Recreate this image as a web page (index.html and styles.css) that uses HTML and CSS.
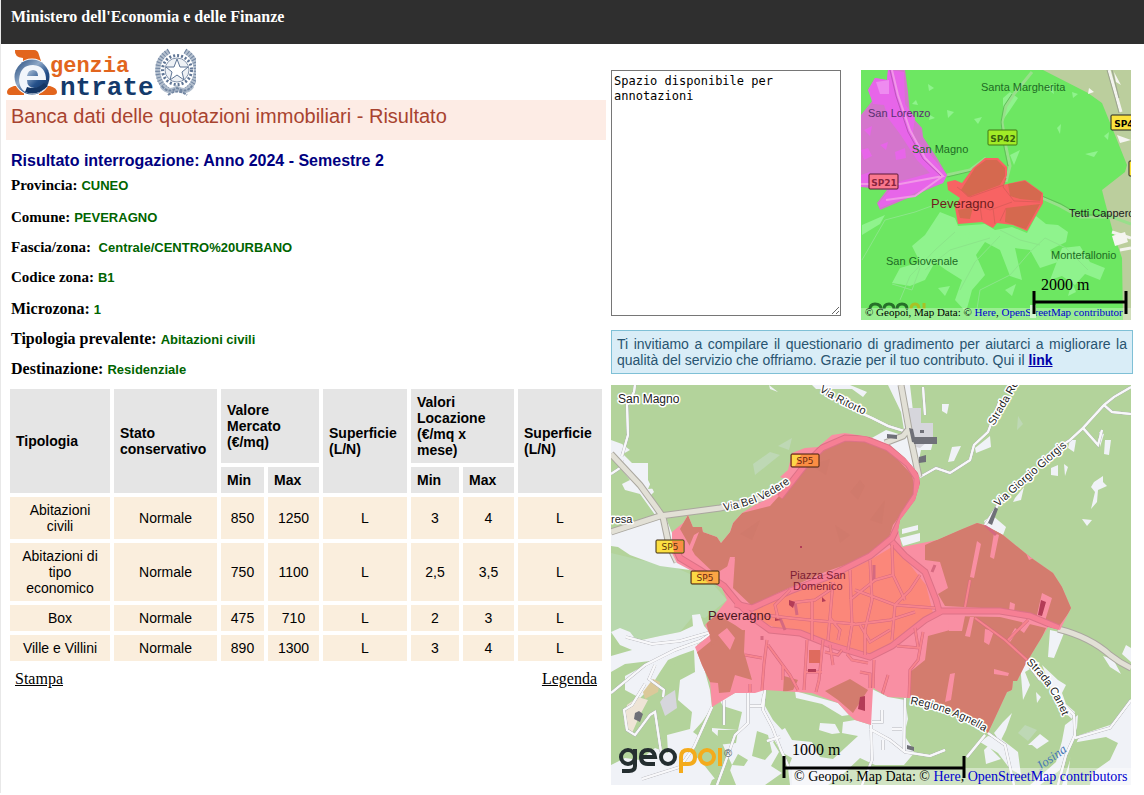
FILE: index.html
```html
<!DOCTYPE html>
<html lang="it">
<head>
<meta charset="utf-8">
<title>Banca dati delle quotazioni immobiliari - Risultato</title>
<link rel="stylesheet" href="styles.css">
</head>
<body>
<header class="topbar">Ministero dell'Economia e delle Finanze</header>
<main class="layout">
  <section class="results">
    <svg class="logo" viewBox="6 48 190 49" role="img" aria-label="Agenzia Entrate">
      <defs>
        <linearGradient id="ball" x1="0" y1="0" x2="1" y2="1"><stop offset="0" stop-color="#1d4478"/><stop offset=".4" stop-color="#8fa9c8"/><stop offset=".65" stop-color="#24508a"/><stop offset="1" stop-color="#0c2a55"/></linearGradient>
      </defs>
      <path d="M15 50H34Q38 50 39 55L41 61H23V58Q14 57 15 50Z" fill="#e2651d"/>
      <path d="M7 92Q7 88 14 86H24V95H10Q7 95 7 92ZM39 95V86H50Q57 88 57 92Q57 95 53 95Z" fill="#e2651d"/>
      <circle cx="32" cy="77" r="18.500" fill="#fff"/>
      <circle cx="32" cy="77" r="17.500" fill="url(#ball)"/>
      <path d="M19 80Q20 65 33 65Q46 66 46 80H27Q27 88 35 88Q40 88 44 84L47 87Q41 94 32 94Q20 93 19 80ZM27 76H38Q38 70 33 70Q28 70 27 76Z" fill="#f2f6fb"/>
      <path d="M25 92Q37 97 48 86L44 83Q37 90 27 87Z" fill="#143665"/>
      <text x="50" y="72" class="logo-top">genzia</text>
      <text x="60" y="95" class="logo-bottom">ntrate</text>
      <g fill="none" stroke="#7387a3">
        <path d="M169 51Q156 59 158 74Q160 86 170 91M185 51Q198 59 196 74Q194 86 184 91" stroke="#b3bfce" stroke-width="5"/>
        <path d="M169 51Q156 59 158 74Q160 86 170 91M185 51Q198 59 196 74Q194 86 184 91" stroke-width="5" stroke-dasharray="1 2"/>
        <circle cx="177" cy="70" r="14.500" stroke="#5f7595" stroke-width="3" stroke-dasharray="2 2"/>
        <circle cx="177" cy="70" r="12" stroke="#8595ad" fill="#eef1f5"/>
        <path d="M162 86Q168 94 177 88Q186 94 192 86" stroke="#b3bfce" stroke-width="5"/>
        <path d="M162 86Q168 94 177 88Q186 94 192 86M168 95Q177 88 187 95" stroke-width="2" stroke-dasharray="3 1"/>
        <path d="M177 59L180 67L188 67L182 72L184 80L177 75L170 80L172 72L166 67L174 67Z" fill="#fff" stroke="#5f7595"/>
      </g>
    </svg>
    <h1 class="title">Banca dati delle quotazioni immobiliari - Risultato</h1>
    <h2 class="subtitle">Risultato interrogazione: Anno 2024 - Semestre 2</h2>
    <dl class="fields">
      <div class="field"><dt>Provincia:</dt><dd>CUNEO</dd></div>
      <div class="field spaced"><dt>Comune:</dt><dd>PEVERAGNO</dd></div>
      <div class="field"><dt>Fascia/zona:</dt><dd>&nbsp;Centrale/CENTRO%20URBANO</dd></div>
      <div class="field"><dt>Codice zona:</dt><dd>B1</dd></div>
      <div class="field spaced large"><dt>Microzona:</dt><dd>1</dd></div>
      <div class="field large"><dt>Tipologia prevalente:</dt><dd>Abitazioni civili</dd></div>
      <div class="field large"><dt>Destinazione:</dt><dd>Residenziale</dd></div>
    </dl>
    <table class="quotes">
      <colgroup><col class="c-type"><col class="c-state"><col class="c-vmin"><col class="c-max"><col class="c-area"><col class="c-lmin"><col class="c-max"><col class="c-area"></colgroup>
      <thead>
        <tr><th rowspan="2">Tipologia</th><th rowspan="2">Stato conservativo</th><th colspan="2">Valore<br>Mercato<br>(€/mq)</th><th rowspan="2">Superficie (L/N)</th><th colspan="2">Valori Locazione (€/mq x mese)</th><th rowspan="2">Superficie (L/N)</th></tr>
        <tr><th>Min</th><th>Max</th><th>Min</th><th>Max</th></tr>
      </thead>
      <tbody>
        <tr><td>Abitazioni civili</td><td>Normale</td><td>850</td><td>1250</td><td>L</td><td>3</td><td>4</td><td>L</td></tr>
        <tr><td>Abitazioni di tipo economico</td><td>Normale</td><td>750</td><td>1100</td><td>L</td><td>2,5</td><td>3,5</td><td>L</td></tr>
        <tr><td>Box</td><td>Normale</td><td>475</td><td>710</td><td>L</td><td>2</td><td>3</td><td>L</td></tr>
        <tr><td>Ville e Villini</td><td>Normale</td><td>890</td><td>1300</td><td>L</td><td>3</td><td>4</td><td>L</td></tr>
      </tbody>
    </table>
    <nav class="actions"><a href="#stampa">Stampa</a><a href="#legenda">Legenda</a></nav>
  </section>

  <section class="side">
    <div class="overview">
      <textarea class="notes" aria-label="Annotazioni">Spazio disponibile per annotazioni</textarea>
      <svg class="map map-small" viewBox="861 70 270 250" role="group" aria-label="Mappa d'insieme">
        <path d="M861 70H1131V320H861Z" fill="#6de762"/>
        <path d="M1043 70L1088 93L1102 103L1115 135L1127 165L1125 172L1102 190L1105 202L1113 232L1122 258L1123 320H1131V70Z" fill="#bbce9d"/>
        <g fill="#8ff38d">
          <path d="M940 212L955 218L958 226L985 224L995 230L1012 227L1027 233L1036 216L1046 224L1058 225L1068 232L1066 242L1050 250L1058 262L1040 268L1030 250L1015 248L1022 280L1010 276L1000 250L985 242L976 255L985 275L972 290L966 312L955 300L962 280L946 270L935 262L925 280L910 286L892 283L900 268L920 262L912 246L925 235Z"/>
          <path d="M1062 248L1080 246L1090 262L1105 268L1100 280L1085 274L1075 285L1062 276L1050 280Z"/>
          <path d="M1003 98L1010 92L1018 98L1010 110L1003 120Z M1045 87L1052 84L1054 94ZM1057 128L1061 124L1060 134ZM1072 92L1078 94L1073 98ZM1104 136L1109 132L1108 140ZM912 104L916 100L918 105ZM928 84L934 88L929 91ZM947 110L954 112L948 118ZM974 119L982 117L978 124ZM930 115L935 118L929 120ZM1010 155L1020 150L1014 165ZM862 225L885 215L880 224L862 235ZM1085 154L1098 151L1094 157ZM938 288L950 286L945 296ZM1005 290L1016 284L1012 296ZM1072 282L1076 292L1068 296ZM960 238L970 232L965 248Z"/>
        </g>
        <path d="M900 300L910 276L935 250L955 232M925 270L950 250L990 238M960 290L975 262L1000 236M976 315L980 290L1010 275L1030 252M1030 252L1045 238L1066 248L1088 270M892 284L912 290L920 268M1000 230L1020 240L1040 245M862 260L885 220L915 212L948 200" fill="none" stroke="#8be689" stroke-width="1"/>
        <path d="M888 70H905L908 92L910 115L922 128L923 137L937 158L947 175L943 183L922 192L908 198L880 210L877 203L887 190L861 187V115L873 100L868 90L875 78L887 80Z" fill="#d475cc"/>
        <path d="M888 70L904 72L905 104L915 118L912 138L925 148L947 175L943 183L922 190L880 208L878 204L890 190L886 186L905 180L930 173L917 160L900 134L888 118L884 105L873 104L868 90L875 78L887 80Z" fill="#e765e9"/>
        <path d="M861 150L868 148L872 156L864 160ZM861 175L870 172V186L861 187Z" fill="#e765e9"/>
        <path d="M876 82L889 80L889 94L880 94Z" fill="#ee8bf0"/>
        <path d="M864 130L872 126L870 136ZM880 145L888 142L886 150ZM895 152L905 148L906 158L896 160Z" fill="#e765e9"/>
        <path d="M892 70L898 95L910 130L925 158L943 176L900 184H861M943 176L915 196L886 200" fill="none" stroke="#f197e8" stroke-width="2"/>
        <path d="M890 70L896 96L908 132L923 159L941 176" fill="none" stroke="#be56be" stroke-width="1"/>
        <path d="M947 175L970 170L986 158M1042 198L1060 206L1080 217H1112L1131 224M1032 72L1014 94L1006 106L1002 122L1006 147L1010 166L1006 182" fill="none" stroke="#98df8b" stroke-width="3"/>
        <path d="M947 177L972 171M1042 196L1061 204L1080 215H1112M1012 94L1004 106L1001 122L1004 147L1008 166" fill="none" stroke="#60be58" stroke-width="1"/>
        <path d="M1109 70L1117 98L1121 112M1112 232L1131 238M1120 250L1131 248" fill="none" stroke="#f3f3ef" stroke-width="3"/>
        <path d="M1107 70L1115 98L1119 113M1112 70L1119 98" fill="none" stroke="#9ca291" stroke-width="1"/>
        <path d="M1114 72L1121 85L1116 82ZM1089 88L1094 92L1088 94ZM1117 135L1131 140L1120 143ZM1112 236L1125 232L1128 242L1115 246Z" fill="#f5f5f1"/>
        <path d="M947 182L955 180L962 183L973 168L985 158H998L1007 167V175L1003 185L1025 180L1043 193V203L1027 231L1013 225L997 223L993 228L982 222L958 224L955 208L960 198L948 190Z" fill="#f86363"/>
        <path d="M961 190L975 168L986 160H997L1005 168L1005 176L1000 185L968 197ZM1008 184L1025 181L1042 193L1040 201L1020 199L1010 196ZM1006 208L1040 204L1026 229L1005 222ZM958 210L973 207L970 219L960 218Z" fill="#d5694f"/>
        <path d="M1006 178L1003 187L1014 201L1040 202M957 187L970 197L1004 185M965 201L990 210L1012 202M993 208L995 224M980 206L982 220M1006 208L1000 221" fill="none" stroke="#df5d5a" stroke-width="1"/>
        <g class="place place-green">
          <text x="981" y="91">Santa Margherita</text><text x="912" y="153">San Magno</text>
          <text x="1051" y="259">Montefallonio</text><text x="886" y="265">San Giovenale</text>
          <text x="1069" y="217" class="ink">Tetti Cappero</text>
        </g>
        <text x="868" y="117" class="place" fill="#583070">San Lorenzo</text>
        <text x="931" y="208" class="town">Peveragno</text>
        <g class="sign">
          <rect x="988" y="130" width="29" height="15" rx="1" fill="#a1ec27" stroke="#407814"/><text x="1003" y="142" fill="#38620e">SP42</text>
          <rect x="869" y="174" width="29" height="15" rx="1" fill="#fa788e" stroke="#5a1636"/><text x="884" y="186" fill="#8a243e">SP21</text>
          <rect x="1111" y="115" width="29" height="15" rx="1" fill="#fbe33e" stroke="#222"/><text x="1127" y="127">SP42</text>
          <rect x="1129" y="161" width="29" height="15" rx="1" fill="#fbe33e" stroke="#222"/>
        </g>
        <g fill="none" stroke-width="3">
          <path d="M870 309Q870 304 875 304Q881 304 881 309M884 309Q884 304 889 304Q894 304 894 309M897 309Q897 304 902 304Q907 304 907 309" stroke="#267029"/>
          <path d="M911 309Q911 304 915 304Q919 304 919 309M924 309V303" stroke="#a8c225"/>
        </g>
        <path d="M861 308H1131V320H861Z" fill="#fff" fill-opacity=".3"/>
        <text x="865" y="316" class="credit-small">© Geopoi, Map Data: © <a href="#here">Here</a>, <a href="#osm">OpenStreetMap contributor</a></text>
        <path d="M1030 305H1036V318H1030Z" fill="#d2f6ce"/>
        <path d="M1034 291V314M1126 291V314M1034 302H1126" class="scale-line"/>
        <text x="1041" y="290" class="scale-text">2000 m</text>
      </svg>
    </div>
    <p class="notice">Ti invitiamo a compilare il questionario di gradimento per aiutarci a migliorare la qualità del servizio che offriamo. Grazie per il tuo contributo. Qui il <a href="#questionario">link</a></p>

    <svg class="map map-large" viewBox="611 385 520 400" role="group" aria-label="Mappa della zona B1 di Peveragno">
      <path d="M611 385H1131V785H611Z" fill="#b3d39b"/>
      <path d="M611 553L640 560L672 566L690 574L712 583L727 600L705 618L694 615L680 632L640 640L620 632L611 635Z" fill="#b8d8ad"/>
      <!-- built-up areas -->
      <g fill="#f0f2f7">
        <path d="M611 440L622 444L630 450L623 454L632 463H648L648 480L654 492L650 496L666 518L672 533L674 555L690 570L660 566L630 555L618 547L611 546V530L658 519L640 494L625 490L622 484L630 480L611 456Z"/>
        <path d="M611 632L620 628L630 632L637 641L660 636L680 632L693 626L692 615L700 614L704 626L711 634L697 645L704 668L710 690L712 707L702 722L693 732L700 737L690 752L700 760L720 785H611V765L625 758L640 760L655 748L668 753L667 735L690 729L692 712L678 700L680 680L695 672L694 650L680 655L660 672L650 688L640 698L625 690L625 676L640 668L650 661L625 664L611 672V656L632 650L620 645Z"/>
        <path d="M735 693L765 690L765 706L773 720L784 732L773 742L779 752L771 766L782 773L765 785H725L732 765L726 752L720 738L712 731V728L738 730L742 712L723 706L720 701Z"/>
        <path d="M772 736L785 728L792 740L812 742L820 757L833 759L858 736L842 733L843 722L855 720L871 725L870 688L888 697L905 700L908 719L904 735L915 752L904 765L875 765L860 758L842 775L828 785H790L788 768L792 758L781 752Z"/>
        <path d="M795 691L838 703L849 715L842 716L822 704L796 698ZM820 723L835 724L840 733L832 734L819 730Z"/>
        <path d="M888 385H910L914 420L920 435L934 438L931 450L921 450L916 475L905 458L890 445L870 439L886 430L905 436L901 412Z"/>
        <path d="M942 404H949L947 414L942 411ZM961 446L954 461L948 462L952 447ZM975 448L990 436L991 447L976 453ZM902 529L918 525L918 530L902 534ZM900 538L920 533V541L903 546ZM1070 440H1076L1074 452L1068 448ZM1099 432L1104 434L1100 447ZM1105 440H1111L1109 455L1104 454ZM1094 482L1103 476V482L1107 486L1098 490L1097 502L1091 509L1095 492L1091 487ZM1082 519L1092 520L1087 526ZM1051 468L1058 465V476L1051 475ZM1064 464L1068 467L1065 476ZM1015 498L1024 487L1021 500L1013 502ZM984 521L992 515L1006 527L1003 535L986 526Z"/>
        <path d="M769 385L778 392L770 389ZM812 385H850L867 392L863 397L852 389H830L816 389ZM988 746L1001 759L986 764L984 750ZM1050 630L1064 633L1054 658L1048 657ZM1020 663L1030 658L1040 663L1025 672L1030 685L1023 700ZM1042 665L1058 680L1066 685L1062 693L1066 704L1075 712L1072 719L1062 710L1053 697L1048 680ZM1036 692L1041 697L1037 703ZM1012 713L1006 730L1000 742L994 733L1003 722ZM1028 745L1040 734L1049 741L1037 749L1032 745ZM1103 656L1113 659L1121 674L1110 667ZM1126 645L1131 648V662L1122 654ZM1000 738L1018 752L1021 775L1010 769L998 753L980 742L988 736ZM1065 725L1078 715L1077 728L1072 740L1060 770L1040 785H1030L1056 762L1062 741Z"/>
        <path d="M1131 700L1122 714L1110 725L1080 735L1074 748L1062 785H1131Z"/>
      </g>
      <path d="M1072 743L1106 737L1118 743L1110 760L1093 772L1090 785H1067ZM718 730H738L736 743L717 745ZM757 731L768 735L772 752L765 760L752 756ZM738 754L748 760L744 766L732 765ZM911 745L920 740L924 752L915 755Z" fill="#b3d39b"/>
      <path d="M652 480L660 488L648 489ZM668 660L680 655L674 665L660 672ZM660 695L678 692L676 710L665 715ZM712 780L730 770L736 785H710Z" fill="#b3d39b"/>
      <path d="M753 464L770 452L780 455L770 463L755 475ZM778 446L792 438L789 450ZM1018 416L1023 424L1017 430ZM1025 725L1037 730L1028 741L1018 733Z" fill="#bed8b5"/>
      <g fill="#d6d6dc"><path d="M906 408H921V423H933V437L920 448L912 446ZM664 697L675 690L677 708L665 716L660 702Z"/><path d="M653 679L660 682L658 692L645 699L643 692Z" fill="#dbc99a"/><path d="M627 705L638 697L648 700L640 715L632 733L624 724Z" fill="#eee4d6"/></g>
      <!-- roads -->
      <g fill="none" stroke="#b4b4ba" stroke-width="3">
        <path id="streets" d="M611 693L645 665L675 650L700 641L712 633M655 665L649 679L664 690L663 697M626 637L652 644L680 641L711 632M645 684L632 705L624 710L627 730L635 735L650 715L655 712L661 752M712 707L694 747L680 767L642 779M724 700V725M748 693V723L735 735L728 755L717 785M750 706H762L764 694M765 690L763 710L772 727L781 750L790 770M767 741L780 737M871 725L872 760L862 785M905 698L904 752M870 729L890 740L905 752L930 756L945 750M872 722H882V710M892 729H902M883 740V750M635 385L634 392L627 405L628 435L622 456M611 474L620 468L622 460M872 418L850 408L830 396M872 418L888 426L904 431M920 477L936 468L950 473L970 460L974 445L988 432L1000 400M1131 387L1114 397L1104 405L1083 428L1070 440L1050 453M1104 405L1112 412L1131 414M1083 428L1098 445L1102 430M1025 660L1040 680M1060 700L1074 715L1075 735L1066 755L1058 785M1075 738L1110 728L1131 700M988 733L1005 745L1014 785M985 735L967 757M923 387L925 415M985 525L998 505"/>
      </g>
      <g fill="none" stroke="#f8f8fa" stroke-width="2"><use href="#streets"/>
        <path d="M611 693L645 665L675 650L700 641L712 633M655 665L649 679L664 690L663 697M626 637L652 644L680 641L711 632M645 684L632 705L624 710L627 730L635 735L650 715L655 712L661 752M712 707L694 747L680 767L642 779M724 700V725M748 693V723L735 735L728 755L717 785M750 706H762L764 694M765 690L763 710L772 727L781 750L790 770M767 741L780 737M871 725L872 760L862 785M905 698L904 752M870 729L890 740L905 752L930 756L945 750M872 722H882V710M892 729H902M883 740V750M635 385L634 392L627 405L628 435L622 456M611 474L620 468L622 460M872 418L850 408L830 396M872 418L888 426L904 431M920 477L936 468L950 473L970 460L974 445L988 432L1000 400M1131 387L1114 397L1104 405L1083 428L1070 440L1050 453M1104 405L1112 412L1131 414M1083 428L1098 445L1102 430M1025 660L1040 680M1060 700L1074 715L1075 735L1066 755L1058 785M1075 738L1110 728L1131 700M988 733L1005 745L1014 785M985 735L967 757M923 387L925 415M985 525L998 505"/>
      </g>
      <g fill="none" stroke="#aaa79f" stroke-width="7"><path d="M611 532L660 516L720 508L770 497M611 454L640 485L656 507L663 517L669 545L677 562M901 385L910 435L919 477M1058 629Q1090 637 1110 655Q1120 663 1131 668M885 443L903 436L908 430"/></g>
      <g fill="none" stroke="#e2e0d6" stroke-width="5"><path d="M611 532L660 516L720 508L770 497M611 454L640 485L656 507L663 517L669 545L677 562M901 385L910 435L919 477M1058 629Q1090 637 1110 655Q1120 663 1131 668M885 443L903 436L908 430"/></g>
      <path d="M913 437H937V444H914ZM909 428L913 429L916 443L912 442ZM887 434L897 435L897 439L887 438ZM919 457L926 455V462L919 463ZM920 430H924V433H920ZM995 507L998 509L992 525L988 523ZM635 713L639 711L643 714L640 722L634 719ZM907 745L914 747V751L907 749Z" fill="#6f7078"/>

      <!-- zone B1 -->
      <clipPath id="zone-clip"><path d="M672 532L683 523L688 515L693 527H702L703 532L717 537L721 543L730 532L733 523L742 513L755 505L772 497L788 480L780 477L788 470L792 453L805 448L818 447L832 435L845 433L870 437L890 445L905 458L918 473L920 483L915 500L900 520L898 530L902 547L937 540L960 530L977 523L985 525L1003 535L1030 557L1053 573L1062 587L1071 608L1060 630L1048 627L1037 645L1025 665L1017 681L1013 681L1012 690L1007 692L988 733L967 718L947 708L910 698L888 697L873 688L871 725L855 720L849 715L838 703L812 693L765 690L755 693H735L712 707L710 682L702 665L695 647L710 635L705 625L715 615L727 600L722 588L690 570L677 563L672 553Z"/></clipPath>
      <g clip-path="url(#zone-clip)">
      <path d="M660 420H1080V740H660Z" fill="#f98fa3"/>
      <g fill="#d37c6e">
        <path d="M680 529L688 515L693 527H702L703 532L717 537L721 543L730 532L733 523L742 513L770 506L788 486L800 473L832 443L860 438L890 451L912 475L915 490L908 505L893 525L889 538L868 557L825 572L780 592L752 606L733 588L735 558L728 566L715 574L695 555Z"/>
        <path d="M925 545L977 522L1005 535L1056 573L1072 608L1060 625L1030 615L1000 609L945 606L938 594L948 588L940 562L925 560Z"/>
        <path d="M950 616L1000 617L1046 628L1030 665L1018 681L1010 692L988 733L967 718L910 698L910 672L925 660L928 636L950 630Z"/>
        <path d="M695 654L722 632L745 630L744 652L752 680L735 675L730 692L719 693L718 683L708 682ZM783 692L784 676L798 680L793 690ZM825 691L850 679L868 690L853 713L838 700Z"/>
        <path d="M706 622L718 615L735 625L745 632L722 632L712 646Z"/>
      </g>
      <path d="M892 547L870 560L830 580L788 592L752 610L762 622L790 634L812 638L870 657L900 641L933 613L926 585L900 552Z" fill="#fb877a"/>
      <g fill="#f98fa3">
        <path d="M977 541L981 544L974 578L970 577ZM994 533L999 535L994 559L990 557ZM948 616H965L962 631H949ZM970 617L974 617L970 637L965 636ZM985 629L994 631L989 645L984 642ZM1042 593L1052 598L1045 621L1036 619ZM1023 621L1030 624L1024 633L1020 630ZM1010 602L1015 604L1014 612L1009 611ZM1018 630L1010 642L1008 640L1015 628ZM994 669L1009 673L1008 676L994 674ZM950 674L955 673L951 700L945 702ZM1026 553L1034 558L1029 560Z"/>
        <path d="M718 635L727 628L735 638L730 650ZM694 535L699 532L690 555L686 554ZM730 557L735 557L728 580L724 578Z"/>
      </g>
      <path d="M850 492L860 480L865 486L858 500ZM870 520L885 500L882 524ZM835 525L850 535L840 543ZM810 465L830 459L826 475ZM740 534L760 520L752 540Z" fill="#c87466" fill-opacity=".2"/>
      <g fill="none" stroke="#dc7287" stroke-width="7"><path d="M675 547L680 558L700 570L724 586L737 602L752 617L770 630L800 633L830 645L870 657L892 646L925 620L942 611L1000 611L1030 616L1059 628"/><path d="M735 604L752 608L790 591L830 576L870 556L892 538L903 515L916 495L917 478L908 464L888 448L865 439L845 438L822 448L805 465L780 497M892 542L905 556L925 572L936 600L939 611"/></g>
      <g fill="none" stroke="#f67f94" stroke-width="5"><path d="M675 547L680 558L700 570L724 586L737 602L752 617L770 630L800 633L830 645L870 657L892 646L925 620L942 611L1000 611L1030 616L1059 628"/><path d="M735 604L752 608L790 591L830 576L870 556L892 538L903 515L916 495L917 478L908 464L888 448L865 439L845 438L822 448L805 465L780 497M892 542L905 556L925 572L936 600L939 611"/></g>
      <path d="M767 640L764 664L762 690M768 645L790 675L798 690M783 665V680M807 640L804 690M823 640L819 680L816 692M830 645L833 665M805 672H822M842 650L838 655L825 652M847 654L852 660L868 663M745 655L762 658M750 684V692M762 636V640M874 660L873 688M915 628L918 647M897 646L920 648M923 632L918 660L910 670L909 698M888 675L882 695M860 672L870 674V688M765 615L790 618L810 620L855 624M790 603L815 600L830 590M812 600V640M833 582L828 640M790 590L775 605L778 618M850 570L852 625L848 650M870 560L872 600L865 630V655M855 590L895 605L935 608M892 545L893 575L905 600M893 575L875 580L850 600M920 575L910 590L895 605L892 640M850 625L890 620L915 612M860 625L870 642L890 630M874 580V565M830 618L840 630L838 640M795 602L797 615M780 618L785 630M970 580L965 607M975 618L1005 640L1027 660M1028 620L1008 640M935 565L932 572M985 525L996 535" fill="none" stroke="#d56980" stroke-width="3"/>
      <path d="M767 640L764 664L762 690M768 645L790 675L798 690M783 665V680M807 640L804 690M823 640L819 680L816 692M830 645L833 665M805 672H822M842 650L838 655L825 652M847 654L852 660L868 663M745 655L762 658M750 684V692M874 660L873 688M915 628L918 647M897 646L920 648M923 632L918 660L910 670L909 698M888 675L882 695M860 672L870 674V688M765 615L790 618L810 620L855 624M790 603L815 600L830 590M812 600V640M833 582L828 640M790 590L775 605L778 618M850 570L852 625L848 650M870 560L872 600L865 630V655M855 590L895 605L935 608M892 545L893 575L905 600M893 575L875 580L850 600M920 575L910 590L895 605L892 640M850 625L890 620L915 612M860 625L870 642L890 630M830 618L840 630L838 640M970 580L965 607M975 618L1005 640L1027 660M1028 620L1008 640" fill="none" stroke="#f7848d" stroke-width="2"/>
      <path d="M789 600L795 602L793 608L789 605ZM822 597L826 601L822 602ZM775 618L781 620L775 621ZM808 669H816V672H808ZM860 697L865 696L865 711L858 709ZM1041 600L1046 602L1042 616L1038 615ZM800 546H802V548H800Z" fill="#b33c57"/>
      <path d="M809 650H820V663H809Z" fill="#df6b5e"/>
      </g>

      <!-- labels -->
      <defs>
        <path id="p-ritorto" d="M819 391Q840 405 870 417"/>
        <path id="p-belvedere" d="M724 511Q768 504 799 475"/>
        <path id="p-rocca" d="M994 426L1024 374"/>
        <path id="p-giorgis" d="M998 507L1074 440"/>
        <path id="p-canet" d="M1026 663Q1054 688 1066 726"/>
        <path id="p-agnella" d="M910 704Q950 710 990 735"/>
      </defs>
      <g class="place halo">
        <text x="618" y="403" class="village">San Magno</text><text x="611" y="523">resa</text>
        <text><textPath href="#p-ritorto">Via Ritorto</textPath></text>
        <text><textPath href="#p-belvedere">Via Bel Vedere</textPath></text>
        <text><textPath href="#p-rocca">Strada Ro</textPath></text>
        <text><textPath href="#p-giorgis">Via Giorgio Giorgis</textPath></text>
        <text><textPath href="#p-canet">Strada Canet</textPath></text>
        <text><textPath href="#p-agnella">Regione Agnella</textPath></text>
      </g>
      <g class="place" fill="#7c1c34"><text x="790" y="579">Piazza San</text><text x="793" y="590">Domenico</text></g>
      <text x="708" y="620" class="town town-large">Peveragno</text>
      <text x="1040" y="771" class="river" transform="rotate(-36 1040 771)">Josina</text>
      <g class="sign sign-large">
        <rect x="791" y="454" width="28" height="13" rx="1" fill="#fb8d43" stroke="#401c0c"/><path d="M792 455H801L795 466H792Z" fill="#fcd648"/><text x="805" y="464" fill="#6e280e">SP5</text>
        <rect x="656" y="540" width="28" height="13" rx="1" fill="#fbdf42" stroke="#38260a"/><path d="M672 541H683V552H674Z" fill="#fb8d43"/><text x="670" y="550" fill="#5e360e">SP5</text>
        <rect x="691" y="571" width="28" height="13" rx="1" fill="#fba545" stroke="#38260a"/><path d="M692 572H697L708 583H692Z" fill="#fbd944"/><text x="705" y="581" fill="#6e280e">SP5</text>
      </g>
      <g fill="none" stroke-width="4">
        <g stroke="#242e30"><circle cx="628" cy="757" r="7"/><path d="M635 749V766Q635 771 629 771H622M642 757H655Q654 750 648 750Q641 750 641 757Q641 764 648 764H655"/><circle cx="668" cy="757" r="7"/></g>
        <g stroke="#f4ab1c"><path d="M681 773V757Q681 750 688 750Q695 750 695 757Q695 764 688 764H683"/><circle cx="707" cy="757" r="7"/><path d="M720 748V766"/></g>
      </g>
      <text x="724" y="757" class="reg">®</text>
      <path d="M792 768H1131V785H792Z" fill="#fff" fill-opacity=".4"/>
      <text x="794" y="781" class="credit">© Geopoi, Map Data: © <a href="#here">Here</a>, <a href="#osm">OpenStreetMap contributors</a></text>
      <path d="M784 756V778M964 756V778M784 768H964" class="scale-line"/>
      <text x="792" y="755" class="scale-text">1000 m</text>
    </svg>
  </section>
</main>
</body>
</html>
```
FILE: styles.css
```css
* { box-sizing: border-box; }
body { margin: 0; border-left: 1px solid #e8e8e8; background: #fff; color: #000; font-family: "Liberation Serif", "Times New Roman", serif; font-size: 16px; }
.topbar { height: 44px; padding: 8px 10px; background: #2f2f2f; color: #fff; font-weight: bold; line-height: 18px; }
.layout { display: grid; grid-template-columns: minmax(0, 600fr) minmax(0, 522fr); column-gap: 5px; padding: 4px 11px 8px 5px; align-items: start; }
.logo { display: block; width: 190px; height: 49px; }
.logo-top, .logo-bottom { font-family: "Liberation Mono", monospace; font-weight: bold; }
.logo-top { font-size: 22px; fill: #e2651d; }
.logo-bottom { font-size: 26px; fill: #143a6b; }
.title { height: 40px; margin: 3px 0 11px; padding: 4px 5px; background: #fdece5; color: #a8432f; font: 20px/24px "Liberation Sans", Arial, sans-serif; }
.subtitle { margin: 0; padding: 0 5px; color: #000080; font: bold 16px/20px "Liberation Sans", Arial, sans-serif; }
.fields { margin: 0; padding: 0 5px; }
.field { display: flex; gap: 4px; align-items: baseline; height: 30px; line-height: 28px; font-size: 15px; }
.large { font-size: 16px; }
.spaced { margin-top: 2px; }
.field dt { font-weight: bold; }
.field dd { margin: 0; color: #006400; font-family: "Liberation Sans", Arial, sans-serif; font-size: 13px; font-weight: bold; }
.quotes { width: 100%; table-layout: fixed; border-collapse: separate; border-spacing: 4px; font: 14px/16px "Liberation Sans", Arial, sans-serif; }
.quotes th, .quotes td { padding: 5px; }
.quotes th { padding-left: 6px; background: #e5e5e5; text-align: left; }
.quotes td { background: #faeedd; text-align: center; }
.c-type { width: 100px; }
.c-state { width: 103px; }
.c-vmin { width: 43px; }
.c-max { width: 51px; }
.c-area { width: 84px; }
.c-lmin { width: 48px; }
.actions { display: flex; justify-content: space-between; padding: 4px 9px; line-height: 20px; }
.actions a { color: #000; }
.side { padding-top: 22px; }
.overview { display: grid; grid-template-columns: minmax(0, 230fr) minmax(0, 270fr); gap: 20px; padding-right: 2px; align-items: start; }
.notes { display: block; width: 100%; height: 246px; margin: 0; padding: 3px 2px; border: 1px solid #767676; font: 12px/15px "DejaVu Sans Mono", monospace; color: #000; background: #fff; }
.map { display: block; width: 100%; font-family: "Liberation Sans", Arial, sans-serif; }
.map-large { padding-right: 2px; }
.notice { margin: 10px 0 11px; padding: 5px; border: 1px solid #7fc0d6; background: #d9edf7; color: #285470; font: 14px/16px "Liberation Sans", Arial, sans-serif; text-align: justify; }
.notice a { color: #0000a8; font-weight: bold; }
.place { font-size: 11px; }
.village { font-size: 12px; }
.place-green { fill: #1d6b24; }
.ink { fill: #202020; }
.halo text { fill: #222; stroke: #fff; stroke-width: 3px; stroke-linejoin: round; paint-order: stroke; }
.town { font-size: 13px; fill: #6f1c1c; }
.town-large { fill: #4c1622; }
.river { font-family: "Liberation Serif", serif; font-size: 13px; font-style: italic; fill: #4779b5; }
.sign text { font: bold 9px "DejaVu Sans", sans-serif; text-anchor: middle; }
.sign-large text { font-weight: normal; }
.reg { font-size: 11px; fill: #52636c; }
.credit, .credit-small, .scale-text { font-family: "Liberation Serif", "Times New Roman", serif; }
.credit { font-size: 14px; }
.credit-small { font-size: 11px; }
.scale-text { font-size: 16px; }
.map a { fill: #0000d0; }
.scale-line { fill: none; stroke: #000; stroke-width: 3px; }
```
